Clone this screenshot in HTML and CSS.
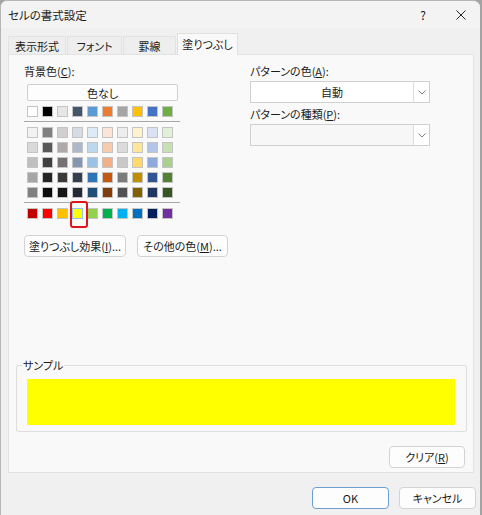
FILE: index.html
```html
<!DOCTYPE html>
<html lang="ja">
<head>
<meta charset="utf-8">
<title>セルの書式設定</title>
<link rel="stylesheet" href="styles.css">
</head>
<body>
<div class="window">
  <div class="titlebar">
    <span class="title">セルの書式設定</span>
    <span class="tb-btn help">?</span>
    <span class="tb-btn close"><svg width="10" height="10" viewBox="0 0 10 10"><path d="M0.5 0.5 L9.5 9.5 M9.5 0.5 L0.5 9.5" stroke="#222" stroke-width="1" fill="none"/></svg></span>
  </div>
  <div class="tabs">
    <div class="tab t1">表示形式</div>
    <div class="tab t2">フォント</div>
    <div class="tab t3">罫線</div>
    <div class="tab t4 active">塗りつぶし</div>
  </div>
  <div class="panel">
    <div class="top">
      <div class="leftcol">
        <div class="label">背景色(<u>C</u>):</div>
        <div class="btn nofill">色なし</div>
        <div class="swrow first">
          <span class="sw" style="background:#FFFFFF"></span>
          <span class="sw" style="background:#000000"></span>
          <span class="sw" style="background:#E7E6E6"></span>
          <span class="sw" style="background:#44546A"></span>
          <span class="sw" style="background:#5B9BD5"></span>
          <span class="sw" style="background:#ED7D31"></span>
          <span class="sw" style="background:#A5A5A5"></span>
          <span class="sw" style="background:#FFC000"></span>
          <span class="sw" style="background:#4472C4"></span>
          <span class="sw" style="background:#70AD47"></span>
        </div>
        <div class="sep"></div>
        <div class="shades">
          <div class="swrow">
            <span class="sw" style="background:#F2F2F2"></span>
            <span class="sw" style="background:#808080"></span>
            <span class="sw" style="background:#D0CECE"></span>
            <span class="sw" style="background:#D6DCE4"></span>
            <span class="sw" style="background:#DDEBF7"></span>
            <span class="sw" style="background:#FCE4D6"></span>
            <span class="sw" style="background:#EDEDED"></span>
            <span class="sw" style="background:#FFF2CC"></span>
            <span class="sw" style="background:#D9E1F2"></span>
            <span class="sw" style="background:#E2EFDA"></span>
          </div>
          <div class="swrow">
            <span class="sw" style="background:#D9D9D9"></span>
            <span class="sw" style="background:#595959"></span>
            <span class="sw" style="background:#AEAAAA"></span>
            <span class="sw" style="background:#ADB9CA"></span>
            <span class="sw" style="background:#BDD7EE"></span>
            <span class="sw" style="background:#F8CBAD"></span>
            <span class="sw" style="background:#DBDBDB"></span>
            <span class="sw" style="background:#FFE699"></span>
            <span class="sw" style="background:#B4C6E7"></span>
            <span class="sw" style="background:#C6E0B4"></span>
          </div>
          <div class="swrow">
            <span class="sw" style="background:#BFBFBF"></span>
            <span class="sw" style="background:#404040"></span>
            <span class="sw" style="background:#757171"></span>
            <span class="sw" style="background:#8497B0"></span>
            <span class="sw" style="background:#9BC2E6"></span>
            <span class="sw" style="background:#F4B084"></span>
            <span class="sw" style="background:#C9C9C9"></span>
            <span class="sw" style="background:#FFD966"></span>
            <span class="sw" style="background:#8EA9DB"></span>
            <span class="sw" style="background:#A9D08E"></span>
          </div>
          <div class="swrow">
            <span class="sw" style="background:#A6A6A6"></span>
            <span class="sw" style="background:#262626"></span>
            <span class="sw" style="background:#3A3838"></span>
            <span class="sw" style="background:#333F4F"></span>
            <span class="sw" style="background:#2F75B5"></span>
            <span class="sw" style="background:#C65911"></span>
            <span class="sw" style="background:#7B7B7B"></span>
            <span class="sw" style="background:#BF8F00"></span>
            <span class="sw" style="background:#305496"></span>
            <span class="sw" style="background:#548235"></span>
          </div>
          <div class="swrow">
            <span class="sw" style="background:#808080"></span>
            <span class="sw" style="background:#0D0D0D"></span>
            <span class="sw" style="background:#171616"></span>
            <span class="sw" style="background:#222B35"></span>
            <span class="sw" style="background:#1F4E78"></span>
            <span class="sw" style="background:#833C0C"></span>
            <span class="sw" style="background:#525252"></span>
            <span class="sw" style="background:#806000"></span>
            <span class="sw" style="background:#203764"></span>
            <span class="sw" style="background:#375623"></span>
          </div>
        </div>
        <div class="sep"></div>
        <div class="swrow std">
          <span class="sw" style="background:#C00000"></span>
          <span class="sw" style="background:#FF0000"></span>
          <span class="sw" style="background:#FFC000"></span>
          <span class="sw selected" style="background:#FFFF00"></span>
          <span class="sw" style="background:#92D050"></span>
          <span class="sw" style="background:#00B050"></span>
          <span class="sw" style="background:#00B0F0"></span>
          <span class="sw" style="background:#0070C0"></span>
          <span class="sw" style="background:#002060"></span>
          <span class="sw" style="background:#7030A0"></span>
          <span class="mark"></span>
        </div>
        <div class="btnrow">
          <div class="btn effect">塗りつぶし効果(<u>I</u>)...</div>
          <div class="btn more">その他の色(<u>M</u>)...</div>
        </div>
      </div>
      <div class="rightcol">
        <div class="label">パターンの色(<u>A</u>):</div>
        <div class="select">
          <span class="sel-text">自動</span>
          <span class="sel-arrow"><svg width="8" height="5" viewBox="0 0 8 5"><path d="M0.5 0.5 L4 4 L7.5 0.5" stroke="#808080" stroke-width="1" fill="none"/></svg></span>
        </div>
        <div class="label second">パターンの種類(<u>P</u>):</div>
        <div class="select disabled">
          <span class="sel-text"></span>
          <span class="sel-arrow"><svg width="8" height="5" viewBox="0 0 8 5"><path d="M0.5 0.5 L4 4 L7.5 0.5" stroke="#808080" stroke-width="1" fill="none"/></svg></span>
        </div>
      </div>
    </div>
    <fieldset class="sample">
      <legend>サンプル</legend>
      <div class="sample-fill"></div>
    </fieldset>
    <div class="clearrow">
      <div class="btn clear">クリア(<u>R</u>)</div>
    </div>
  </div>
  <div class="footer">
    <div class="btn ok">OK</div>
    <div class="btn cancel">キャンセル</div>
  </div>
</div>
</body>
</html>
```

FILE: styles.css
```css
html, body {
  margin: 0;
  padding: 0;
  background: #a3a3a3;
}
body {
  width: 482px;
  height: 515px;
  overflow: hidden;
  font-family: "Noto Sans CJK JP", "Noto Sans", sans-serif;
  font-size: 11px;
  font-feature-settings: "palt" 1;
  color: #1b1b1b;
  white-space: nowrap;
}
u { text-decoration: underline; text-underline-offset: 1px; }

.window {
  width: 480px;
  height: 515px;
  box-sizing: border-box;
  background: #f0f0f0;
  border-left: 1px solid #b5b5b5;
  border-top: 1px solid #b5b5b5;
  border-radius: 7px 7px 0 0;
  overflow: hidden;
}

.titlebar {
  height: 27px;
  display: flex;
  align-items: center;
  background: #f3f3f3;
}
.title {
  flex: 1;
  padding-left: 7px;
  line-height: 16px;
  font-size: 11.5px;
}
.tb-btn {
  width: 38px;
  height: 27px;
  display: flex;
  align-items: center;
  justify-content: center;
  font-size: 12px;
}

.tabs {
  display: flex;
  align-items: flex-end;
  height: 21px;
  margin-top: 5px;
  padding-left: 7px;
  position: relative;
  z-index: 1;
}
.tab {
  height: 18px;
  box-sizing: border-box;
  display: flex;
  align-items: center;
  justify-content: center;
  background: #eeeeee;
  border: 1px solid #e2e2e2;
  border-bottom: none;
  margin-right: 1px;
  line-height: 14px;
}
.t1 { width: 58px; }
.t2 { width: 55px; }
.t3 { width: 53px; }
.t4 { width: 61px; }
.tab.active {
  height: 22px;
  margin-bottom: -1px;
  background: #f9f9f9;
  border-color: #e0e0e0;
  padding-bottom: 1px;
}

.panel {
  margin-left: 7px;
  width: 466px;
  height: 419px;
  box-sizing: border-box;
  background: #f9f9f9;
  border: 1px solid #e3e3e3;
  padding: 8px 7px 0 7px;
  display: flex;
  flex-direction: column;
  overflow: hidden;
}

.top {
  display: flex;
  padding-left: 8px;
}
.leftcol { width: 226px; }
.rightcol { width: 180px; }

.label {
  height: 16px;
  line-height: 16px;
}
.label.second { margin-top: 3px; }

.btn {
  box-sizing: border-box;
  background: #fdfdfd;
  border: 1px solid #d3d3d3;
  border-radius: 4px;
  display: flex;
  align-items: center;
  justify-content: center;
  line-height: 14px;
}
.nofill {
  margin-top: 5px;
  margin-left: 3px;
  width: 151px;
  height: 17px;
  border-radius: 2px;
  border-color: #cfcfcf;
}

.swrow {
  display: flex;
  gap: 4px;
  margin-left: 3px;
  height: 11px;
}
.swrow.first { margin-top: 5px; }
.sw {
  width: 11px;
  height: 11px;
  box-sizing: border-box;
  border: 1px solid #c4c4c4;
}
.sw.selected { border-color: #8ec3ee; }

.sep {
  width: 156px;
  height: 1px;
  background: #a8a8a8;
  margin-top: 4px;
}
.shades {
  margin-top: 5px;
  display: flex;
  flex-direction: column;
  gap: 4px;
}
.swrow.std {
  margin-top: 5px;
  position: relative;
}
.mark {
  position: absolute;
  left: 43px;
  top: -7px;
  width: 18px;
  height: 27px;
  box-sizing: border-box;
  border: 2px solid #e0141b;
  border-radius: 3px;
}

.btnrow {
  display: flex;
  gap: 11px;
  margin-top: 16px;
}
.btnrow .btn { height: 22px; }
.effect { width: 102px; }
.more { width: 91px; }

.select {
  margin-top: 2px;
  width: 180px;
  height: 22px;
  box-sizing: border-box;
  border: 1px solid #d0d0d0;
  background: #ffffff;
  display: flex;
}
.select.disabled { background: #f7f7f7; }
.sel-text {
  flex: 1;
  display: flex;
  align-items: center;
  justify-content: center;
  line-height: 14px;
}
.sel-arrow {
  width: 15px;
  border-left: 1px solid #dedede;
  background: #ffffff;
  display: flex;
  align-items: center;
  justify-content: center;
}

.sample {
  margin: 101px 0 0 0;
  width: 451px;
  box-sizing: border-box;
  border: 1px solid #dedede;
  border-radius: 2px;
  padding: 0 11px 6px 10px;
  min-width: 0;
}
.sample legend {
  padding: 0 1px;
  margin-left: -5px;
  line-height: 14px;
}
.sample-fill {
  margin-top: 7px;
  height: 46px;
  background: #ffff00;
}

.clearrow {
  display: flex;
  justify-content: flex-end;
  margin-top: 14px;
  padding-right: 1px;
}
.clear {
  width: 76px;
  height: 22px;
}

.footer {
  display: flex;
  justify-content: flex-end;
  gap: 10px;
  padding-top: 14px;
  padding-right: 4px;
}
.footer .btn {
  width: 77px;
  height: 22px;
}
.ok { border-color: #6d9fd3; }
```
